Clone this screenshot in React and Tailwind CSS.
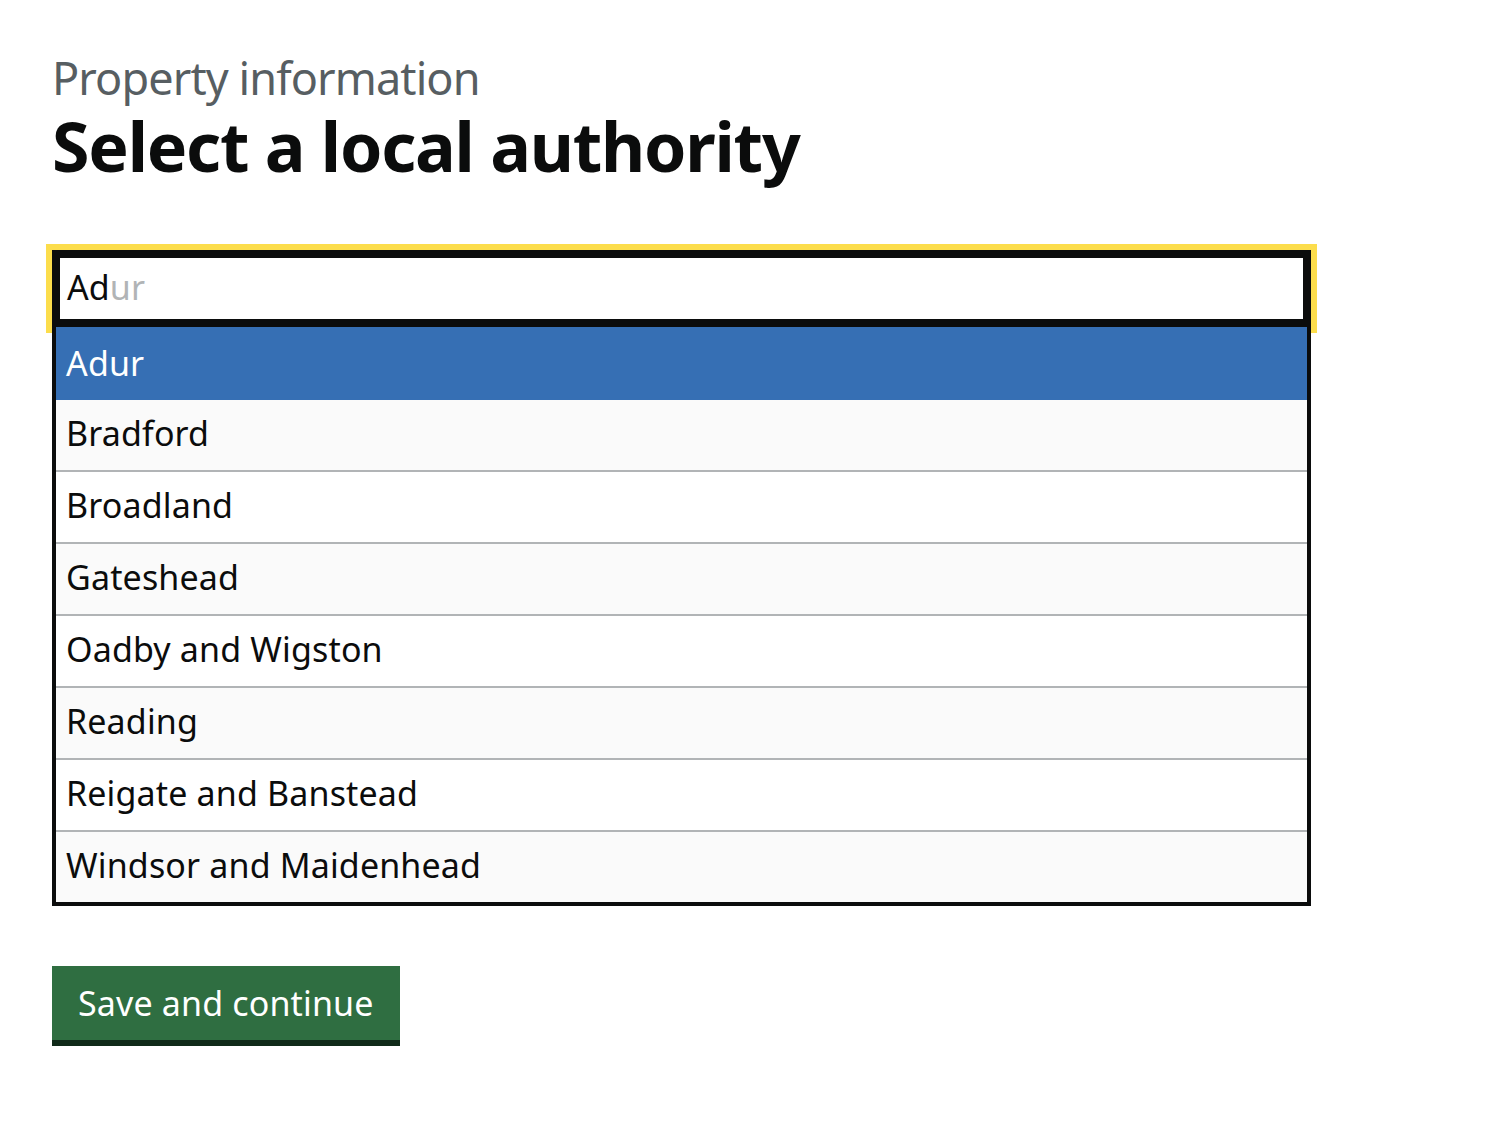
import React from "react";

const authorities = [
  "Adur",
  "Bradford",
  "Broadland",
  "Gateshead",
  "Oadby and Wigston",
  "Reading",
  "Reigate and Banstead",
  "Windsor and Maidenhead",
];

export default function App() {
  return (
    <div className="min-h-screen bg-white pl-[52px] pt-[53px] text-[#0b0c0c] font-['Noto_Sans',sans-serif]">
      {/* Caption + heading */}
      <span className="block text-[45px] leading-[50px] tracking-[-0.9px] text-[#575e62]">Property information</span>
      <h1 className="mt-[3px] text-[68px] leading-[80px] font-bold tracking-[-1.2px]">Select a local authority</h1>

      {/* Autocomplete */}
      <div className="mt-[64px] w-[1259px]">
        <div className="h-[77px] border-[8px] border-[#0b0c0c] bg-white pl-[7px] text-[34px] leading-[59px] tracking-[0.1px] outline-[6px] outline-solid outline-[#fcdd4c]">
          <span>Ad</span>
          <span className="text-[#b1b4b6]">ur</span>
        </div>
        <ul className="relative border-x-[4px] border-b-[4px] border-[#0b0c0c] bg-white text-[34px] leading-[67px] tracking-[0.15px]">
          {authorities.map((name, i) => {
            const first = i === 0;
            const last = i === authorities.length - 1;
            return (
              <li
                key={name}
                className={
                  first
                    ? "h-[73px] bg-[#366fb4] pl-[10px] pt-[3px] text-white"
                    : last
                    ? "h-[70px] bg-[#fafafa] pl-[10px]"
                    : i % 2 === 1
                    ? "h-[72px] border-b-2 border-[#b1b4b6] bg-[#fafafa] pl-[10px]"
                    : "h-[72px] border-b-2 border-[#b1b4b6] bg-white pl-[10px]"
                }
              >
                {name}
              </li>
            );
          })}
        </ul>
      </div>

      {/* Button */}
      <button className="mt-[60px] h-[80px] border-b-[6px] border-[#102a19] bg-[#2f6e41] px-[26px] text-[34px] leading-[75px] tracking-[0.15px] text-white">
        Save and continue
      </button>
    </div>
  );
}
